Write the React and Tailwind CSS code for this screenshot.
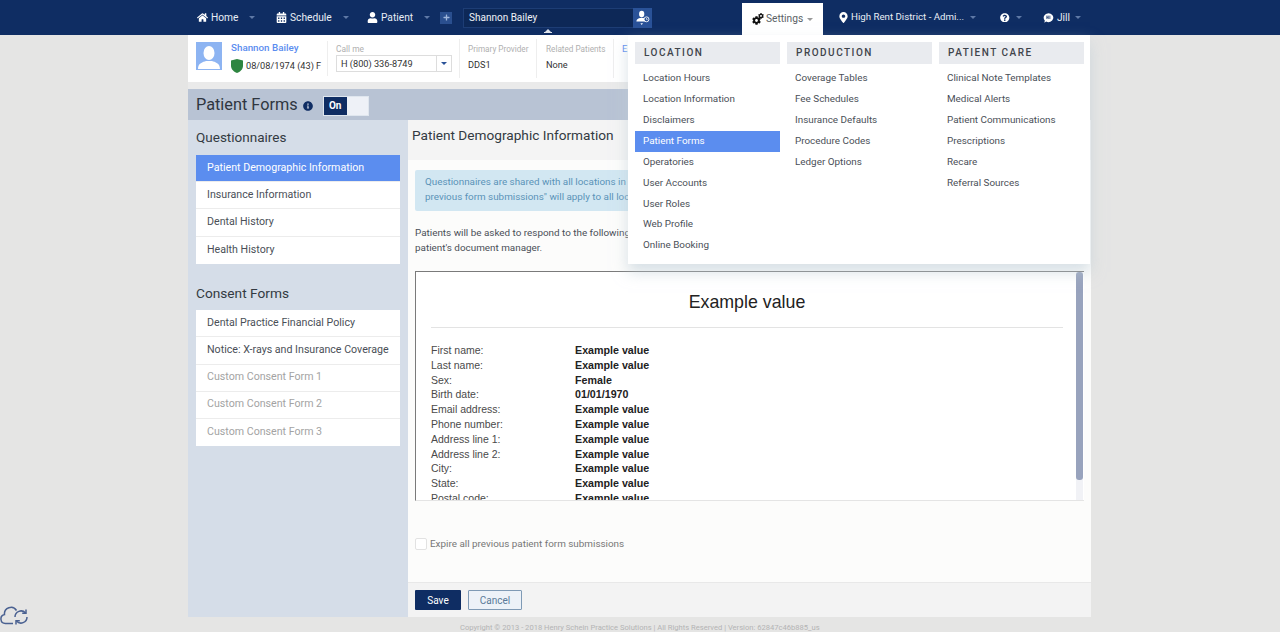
import React from 'react';
import {
  FaHome,
  FaCalendarAlt,
  FaUser,
  FaPlus,
  FaCog,
  FaMapMarkerAlt,
  FaQuestionCircle,
  FaInfoCircle,
} from 'react-icons/fa';

const QUESTIONNAIRES = [
  'Patient Demographic Information',
  'Insurance Information',
  'Dental History',
  'Health History',
];

const CONSENT_FORMS = [
  { label: 'Dental Practice Financial Policy' },
  { label: 'Notice: X-rays and Insurance Coverage' },
  { label: 'Custom Consent Form 1', muted: true },
  { label: 'Custom Consent Form 2', muted: true },
  { label: 'Custom Consent Form 3', muted: true },
];

const MENU = [
  {
    title: 'LOCATION',
    items: [
      'Location Hours',
      'Location Information',
      'Disclaimers',
      'Patient Forms',
      'Operatories',
      'User Accounts',
      'User Roles',
      'Web Profile',
      'Online Booking',
    ],
  },
  {
    title: 'PRODUCTION',
    items: ['Coverage Tables', 'Fee Schedules', 'Insurance Defaults', 'Procedure Codes', 'Ledger Options'],
  },
  {
    title: 'PATIENT CARE',
    items: [
      'Clinical Note Templates',
      'Medical Alerts',
      'Patient Communications',
      'Prescriptions',
      'Recare',
      'Referral Sources',
    ],
  },
];

const FIELDS = [
  ['First name:', 'Example value'],
  ['Last name:', 'Example value'],
  ['Sex:', 'Female'],
  ['Birth date:', '01/01/1970'],
  ['Email address:', 'Example value'],
  ['Phone number:', 'Example value'],
  ['Address line 1:', 'Example value'],
  ['Address line 2:', 'Example value'],
  ['City:', 'Example value'],
  ['State:', 'Example value'],
  ['Postal code:', 'Example value'],
];

const Caret = ({ className = 'border-t-[#5f79a6]' }) => (
  <span className={`inline-block w-0 h-0 border-x-[3px] border-x-transparent border-t-[3.5px] ${className}`} />
);

const NavItem = ({ icon, label, width }) => (
  <div className={`flex items-center h-full text-[10.2px] text-[#e8edf5] ${width}`}>
    <span className="w-[11px] mr-[3px] flex justify-center text-white text-[11px]">{icon}</span>
    <span className="whitespace-nowrap">{label}</span>
    <span className="flex ml-[11px]">
      <Caret />
    </span>
  </div>
);

const JillIcon = () => (
  <svg viewBox="0 0 16 16" className="w-[11px] h-[12px]">
    <path d="M8 1a7 6.5 0 1 1-3.4 12.2L2 15l.6-3.400A7 6.500 0 0 1 8 1z" fill="#fff" />
    <path d="M5.600 4.500v5M7.600 4.500v5M5.600 7h2M10 4.500v5" stroke="#0f2d63" strokeWidth="1.1" fill="none" />
  </svg>
);

const PatientSearchIcon = () => (
  <svg viewBox="0 0 16 18" className="w-[14px] h-[16px]">
    <ellipse cx="6.500" cy="4.500" rx="3" ry="3.800" fill="#fff" />
    <path d="M0.500 13c0-3 3-3.500 4-4h4c1 .5 2.500 1 3 2v2z" fill="#fff" />
    <circle cx="12" cy="10.500" r="2.800" fill="#2a5298" stroke="#fff" strokeWidth="1" />
    <path d="M12 9v1.700h1.200" stroke="#fff" strokeWidth=".7" fill="none" />
    <path d="M5 15h3l-1.500 2z" fill="#fff" />
  </svg>
);

const SettingsIcon = () => (
  <span className="relative w-[12px] h-[12px] mr-[3px] text-[#111]">
    <FaCog className="absolute left-0 bottom-0 w-[9px] h-[9px]" />
    <FaCog className="absolute right-0 top-0 w-[6px] h-[6px]" />
  </span>
);

const TopNav = () => (
  <div className="h-[35px] bg-[#0f2d63]">
    <div className="w-[902px] ml-[188px] h-full flex pl-[9px]">
      <NavItem icon={<FaHome />} label="Home" width="w-[79px]" />
      <NavItem icon={<FaCalendarAlt />} label="Schedule" width="w-[91px]" />
      <NavItem icon={<FaUser />} label="Patient" width="w-[73px]" />
      <div className="flex items-center h-full">
        <span className="w-[12px] h-[12px] bg-[#2a4f8f] flex items-center justify-center text-[#9fb6dc] text-[7px]">
          <FaPlus />
        </span>
      </div>
      <div className="relative ml-[11px] my-[8px] w-[189px] h-[20px] flex border border-[#1d3d75] bg-[#0d2857]">
        <span className="flex-1 pl-[5px] text-[10px] leading-[18px] text-[#f0f3f8]">Shannon Bailey</span>
        <span className="w-[19px] h-[20px] -mt-px -mr-px bg-[#2a5298] flex items-center justify-center">
          <PatientSearchIcon />
        </span>
        <span className="absolute left-[80px] top-[20px] flex flex-col items-center">
          <span className="w-0 h-0 border-x-[3px] border-x-transparent border-b-[3px] border-b-[#dfe4ec]" />
          <span className="w-[8px] h-px bg-[#dfe4ec]" />
        </span>
      </div>
      <div className="w-[90px]" />
      <div className="w-[81px] mt-[3px] h-[32px] bg-white flex items-center pl-[10px] text-[10.2px] text-[#5a5f66]">
        <SettingsIcon />
        <span className="-ml-[1px]">Settings</span>
        <span className="flex ml-[4px]">
          <Caret className="border-t-[#9a9a9a]" />
        </span>
      </div>
      <div className="w-[177px] pl-[15px] flex items-center text-[9.7px] text-[#e8edf5]">
        <span className="w-[8px] text-white text-[11px] mr-[5px]">
          <FaMapMarkerAlt />
        </span>
        <span className="whitespace-nowrap">High Rent District - Admi...</span>
        <span className="flex ml-[6px]">
          <Caret />
        </span>
      </div>
      <div className="w-[43px] flex items-center">
        <span className="text-white text-[9.5px] mr-[6px]">
          <FaQuestionCircle />
        </span>
        <Caret />
      </div>
      <div className="flex items-center text-[10.2px] text-[#e8edf5]">
        <JillIcon />
        <span className="ml-[3px] mr-[5px]">Jill</span>
        <Caret />
      </div>
    </div>
  </div>
);

const PatientHeader = () => (
  <div className="h-[47px] bg-white flex text-[9.2px] text-[#333] overflow-hidden">
    <div className="w-[26px] h-[28px] ml-[8px] mt-[7px] bg-[#8db4f2] flex items-end justify-center">
      <svg viewBox="0 0 26 27" className="w-[26px] h-[27px]">
        <ellipse cx="13" cy="10" rx="5.500" ry="7" fill="#fff" />
        <path d="M2 26c0-6 5-7 8-8h6c3 1 8 2 8 8z" fill="#fff" />
      </svg>
    </div>
    <div className="w-[106px] pl-[9px] border-r border-[#eee] my-[6px]">
      <div className="text-[#5b8def] font-medium text-[9.8px] leading-[13px]">Shannon Bailey</div>
      <div className="flex items-center mt-[5px]">
        <svg viewBox="0 0 12 14" className="w-[12px] h-[14px] mr-[3px]">
          <path d="M6 0l6 1.600v5.200C12 10.500 9 13 6 14 3 13 0 10.500 0 6.800V1.600z" fill="#2e8540" />
        </svg>
        <span className="whitespace-nowrap">08/08/1974 (43) F</span>
      </div>
    </div>
    <div className="w-[132px] pl-[8px] pt-[4px] border-r border-[#eee] my-[4px]">
      <div className="text-[#b0b0b0] text-[8.4px] leading-[12px]">Call me</div>
      <div className="flex w-[116px] h-[17px] border border-[#ddd] items-center">
        <span className="flex-1 pl-[4px] whitespace-nowrap">H (800) 336-8749</span>
        <span className="w-[15px] h-full border-l border-[#ddd] flex items-center justify-center">
          <Caret className="border-t-[#2a5298]" />
        </span>
      </div>
    </div>
    <div className="w-[77px] pl-[8px] pt-[4px] border-r border-[#eee] my-[4px]">
      <div className="text-[#b0b0b0] text-[8.2px] leading-[12px] whitespace-nowrap">Primary Provider</div>
      <div className="mt-[2px] leading-[15px]">DDS1</div>
    </div>
    <div className="w-[77px] pl-[9px] pt-[4px] border-r border-[#eee] my-[4px]">
      <div className="text-[#b0b0b0] text-[8.2px] leading-[12px] whitespace-nowrap">Related Patients</div>
      <div className="mt-[2px] leading-[15px]">None</div>
    </div>
    <div className="pl-[8px] pt-[8px] text-[#5b8def] text-[9.5px] leading-[12px]">E</div>
  </div>
);

const SideList = ({ children }) => (
  <div className="mx-[8px] w-[204px] bg-white flex flex-col">{children}</div>
);

const SideRow = ({ label, active, muted, last }) => (
  <div
    className={`h-[27.2px] pl-[11px] pb-px flex items-center text-[10.65px] whitespace-nowrap ${
      active ? 'bg-[#5b8def] text-white' : muted ? 'text-[#a3a3a3]' : 'text-[#4a4f57]'
    } ${last ? '' : 'border-b border-[#ececec]'}`}
  >
    {label}
  </div>
);

const Sidebar = () => (
  <div className="w-[220px] bg-[#d5dde8] flex flex-col">
    <div className="h-[35px] pl-[8px] flex items-center text-[13.5px] text-[#333a42]">Questionnaires</div>
    <SideList>
      {QUESTIONNAIRES.map((label, i) => (
        <SideRow key={label} label={label} active={i === 0} last={i === 3} />
      ))}
    </SideList>
    <div className="h-[46.5px] pt-[13px] pl-[8px] flex items-center text-[13.7px] text-[#333a42]">Consent Forms</div>
    <SideList>
      {CONSENT_FORMS.map((form, i) => (
        <SideRow key={form.label} label={form.label} muted={form.muted} last={i === 4} />
      ))}
    </SideList>
  </div>
);

const Preview = () => (
  <div className="relative mx-[7px] h-[230px] w-[669px] border-l border-t border-[#7a7a7a] border-b-[#e4e4e4] border-b overflow-hidden font-['Liberation_Sans',Arial,sans-serif] bg-white">
    <div className="pl-[15px] pr-[21px]">
      <div className="h-[56px] border-b border-[#e3e3e3] pt-[20px] text-center text-[17.8px] leading-[21px] text-[#222]">
        Example value
      </div>
      <div className="pt-[15px]">
        {FIELDS.map(([label, value]) => (
          <div key={label} className="flex h-[14.8px] leading-[14.8px]">
            <span className="w-[144px] text-[10.5px] text-[#4a4a4a]">{label}</span>
            <span className="text-[10.7px] font-bold text-[#222]">{value}</span>
          </div>
        ))}
      </div>
    </div>
    <div className="absolute right-[1px] top-0 bottom-0 w-[7px] bg-[#f1f2f6]">
      <div className="h-[208px] bg-[#98a3bd] rounded-[3px]" />
    </div>
  </div>
);

const Content = () => (
  <div className="flex-1 bg-[#fcfcfb] flex flex-col">
    <div className="h-[40px] bg-[#f4f4f4] pl-[4px] pt-[5px] text-[13.65px] leading-[20px] text-[#333a42]">
      Patient Demographic Information
    </div>
    <div className="mt-[10px] mx-[7px] h-[41px] bg-[#d2e7f2] pl-[10px] pt-[4px] text-[9.85px] leading-[15px] text-[#5a93b8] rounded-[2px] whitespace-nowrap">
      <div>Questionnaires are shared with all locations in</div>
      <div>previous form submissions" will apply to all loc</div>
    </div>
    <div className="mt-[14px] mx-[7px] text-[9.9px] leading-[15px] text-[#4a4f57]">
      <div>Patients will be asked to respond to the following</div>
      <div>patient's document manager.</div>
    </div>
    <div className="mt-[16px]">
      <Preview />
    </div>
    <div className="mt-[36px] ml-[7px] flex items-center text-[9.9px] text-[#777]">
      <span className="w-[12px] h-[12px] border border-[#e2e2e2] rounded-[2px] mr-[3px] bg-white" />
      Expire all previous patient form submissions
    </div>
    <div className="mt-auto h-[35px] bg-[#f3f3f3] border-t border-[#e8e8e8] flex items-center pl-[7px]">
      <button className="w-[46px] h-[20px] bg-[#0f2d63] text-white text-[10px] rounded-[1px]">Save</button>
      <button className="ml-[7px] w-[54px] h-[20px] bg-[#edf2f8] border border-[#7f9ab5] text-[#5a7a99] text-[10px] rounded-[1px]">
        Cancel
      </button>
    </div>
  </div>
);

const SettingsMenu = () => (
  <div className="absolute left-[440px] top-0 w-[462px] h-[229px] bg-white shadow-[0_8px_14px_rgba(190,205,215,0.6)] flex pl-[7px] pt-[7px] gap-[7px]">
    {MENU.map((col) => (
      <div key={col.title} className="w-[145px]">
        <div className="h-[22px] pb-px bg-[#e9ebef] pl-[9px] flex items-center text-[10px] font-medium tracking-[1.5px] text-[#3f444b]">
          {col.title}
        </div>
        <div className="mt-[4.5px]">
          {col.items.map((item) => (
            <div
              key={item}
              className={`h-[20.85px] pl-[8px] flex items-center text-[9.9px] whitespace-nowrap ${
                item === 'Patient Forms' ? 'bg-[#5b8def] text-white' : 'text-[#4a4f57]'
              }`}
            >
              {item}
            </div>
          ))}
        </div>
      </div>
    ))}
  </div>
);

const CloudSync = () => (
  <svg viewBox="0 0 30 20" className="absolute left-0 bottom-[6px] w-[30px] h-[20px]" fill="none" stroke="#4a6191" strokeWidth="1.5">
    <path d="M13 17.500H5.500a4.500 4.500 0 0 1-1-8.900A6.500 6.500 0 0 1 16.500 4.500" />
    <path d="M15 11a6 6 0 0 1 10.500-4M27 11a6 6 0 0 1-10.500 4" />
    <path d="M26 3.500v3.800h-3.800M16 18.500v-3.800h3.800" />
  </svg>
);

export default function App() {
  return (
    <div className="relative h-[632px] overflow-hidden bg-[#e5e5e4] font-['Roboto',sans-serif]">
      <TopNav />
      <div className="relative w-[902px] ml-[188px]">
        <PatientHeader />
        <div className="h-[7px] bg-[#eaeaea]" />
        <div className="h-[31px] pt-[2px] bg-[#b8c3d4] flex items-center pl-[8px]">
          <span className="text-[16.3px] text-[#2f3640]">Patient Forms</span>
          <span className="ml-[5px] text-[#0f2d63] text-[10px]">
            <FaInfoCircle />
          </span>
          <span className="ml-[10px] w-[46px] h-[20px] border border-[#dfe6ee] flex text-[10px] font-bold text-white">
            <span className="w-[23px] bg-[#0f2d63] flex items-center justify-center">On</span>
            <span className="flex-1 bg-[#eef1f7]" />
          </span>
        </div>
        <div className="h-[497px] flex">
          <Sidebar />
          <Content />
        </div>
        <div className="h-[15px] pt-[7px] pl-[272px] flex items-center text-[7.6px] text-[#b4b4b4] whitespace-nowrap">
          Copyright © 2013 - 2018 Henry Schein Practice Solutions | All Rights Reserved | Version: 62847c46b885_us
        </div>
        <SettingsMenu />
      </div>
      <CloudSync />
    </div>
  );
}
